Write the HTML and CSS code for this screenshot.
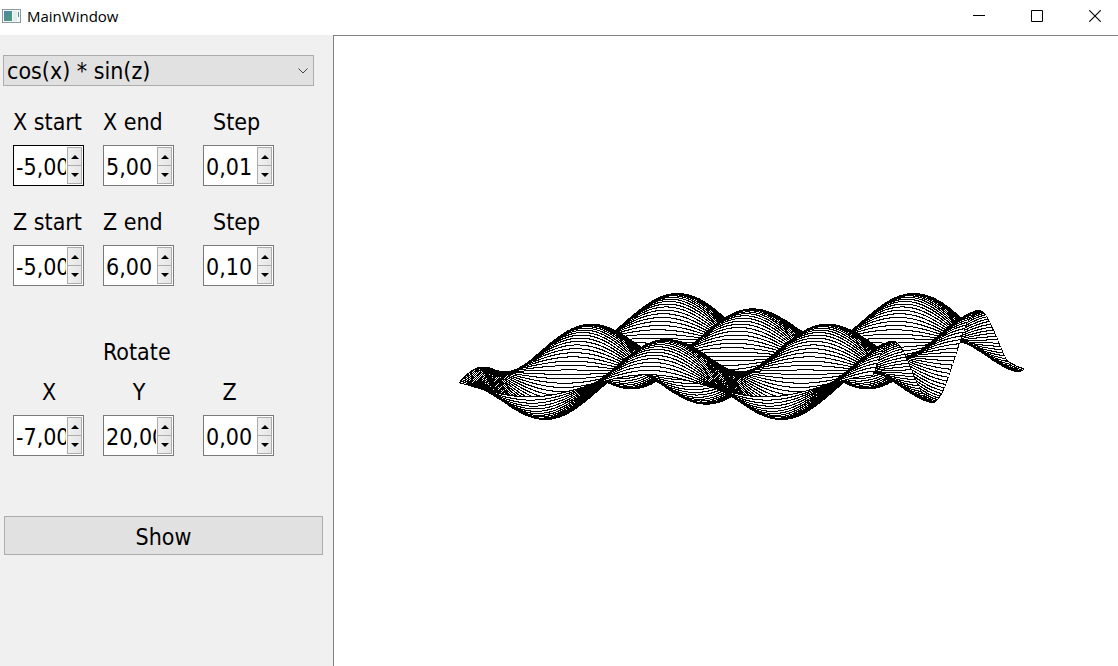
FILE: index.html
```html
<!DOCTYPE html>
<html lang="en">
<head>
<meta charset="utf-8">
<title>MainWindow</title>
<link rel="stylesheet" href="styles.css">
</head>
<body>
<header class="titlebar">
  <svg class="app-icon" width="20" height="16" viewBox="0 0 20 16" aria-hidden="true">
    <defs><linearGradient id="g" x1="0" y1="0" x2="1" y2="1"><stop offset="0" stop-color="#4b86a8"/><stop offset="1" stop-color="#4f9a78"/></linearGradient></defs>
    <rect x="1.5" y="1.5" width="18" height="13" fill="#f4f8f8" stroke="#8c9a9e"/>
    <rect x="3" y="3" width="8" height="10" fill="url(#g)"/>
    <rect x="12" y="3" width="4" height="10" fill="#e2ecec"/>
    <rect x="17" y="4" width="1" height="5" fill="#5d8a96"/>
  </svg>
  <h1 class="title">MainWindow</h1>
  <div class="window-buttons">
    <button class="window-button" aria-label="Minimize"><svg width="12" height="12" viewBox="0 0 12 12"><path d="M0 5.5H12" stroke="#000"/></svg></button>
    <button class="window-button" aria-label="Maximize"><svg width="12" height="12" viewBox="0 0 12 12"><path d="M.5 .5H11.5V11.5H.5Z" fill="none" stroke="#000"/></svg></button>
    <button class="window-button" aria-label="Close"><svg width="12" height="12" viewBox="0 0 12 12"><path d="M.3 .3L11.7 11.7M11.7 .3L.3 11.7" stroke="#000" stroke-width="1.1"/></svg></button>
  </div>
</header>
<main class="content">
  <form class="panel">
    <select class="function-select" aria-label="Function"><option>cos(x) * sin(z)</option></select>
    <div class="fields">
      <label for="xs">X start</label><label for="xe">X end</label><label class="step" for="xd">Step</label>
      <div class="spin focused"><input id="xs" value="-5,00"><div class="arrows"><button type="button" class="arrow up" aria-label="Increase"></button><button type="button" class="arrow down" aria-label="Decrease"></button></div></div>
      <div class="spin"><input id="xe" value="5,00"><div class="arrows"><button type="button" class="arrow up" aria-label="Increase"></button><button type="button" class="arrow down" aria-label="Decrease"></button></div></div>
      <div class="spin"><input id="xd" value="0,01"><div class="arrows"><button type="button" class="arrow up" aria-label="Increase"></button><button type="button" class="arrow down" aria-label="Decrease"></button></div></div>
    </div>
    <div class="fields">
      <label for="zs">Z start</label><label for="ze">Z end</label><label class="step" for="zd">Step</label>
      <div class="spin"><input id="zs" value="-5,00"><div class="arrows"><button type="button" class="arrow up" aria-label="Increase"></button><button type="button" class="arrow down" aria-label="Decrease"></button></div></div>
      <div class="spin"><input id="ze" value="6,00"><div class="arrows"><button type="button" class="arrow up" aria-label="Increase"></button><button type="button" class="arrow down" aria-label="Decrease"></button></div></div>
      <div class="spin"><input id="zd" value="0,10"><div class="arrows"><button type="button" class="arrow up" aria-label="Increase"></button><button type="button" class="arrow down" aria-label="Decrease"></button></div></div>
    </div>
    <div class="fields rotation">
      <h2 class="heading">Rotate</h2>
      <label class="axis" for="rx">X</label><label class="axis" for="ry">Y</label><label class="axis last" for="rz">Z</label>
      <div class="spin"><input id="rx" value="-7,00"><div class="arrows"><button type="button" class="arrow up" aria-label="Increase"></button><button type="button" class="arrow down" aria-label="Decrease"></button></div></div>
      <div class="spin"><input id="ry" value="20,00"><div class="arrows"><button type="button" class="arrow up" aria-label="Increase"></button><button type="button" class="arrow down" aria-label="Decrease"></button></div></div>
      <div class="spin"><input id="rz" value="0,00"><div class="arrows"><button type="button" class="arrow up" aria-label="Increase"></button><button type="button" class="arrow down" aria-label="Decrease"></button></div></div>
    </div>
    <button type="button" class="show">Show</button>
  </form>
  <section class="view"><canvas class="plot" id="plot" role="img" aria-label="Surface plot"></canvas></section>
</main>
<script src="plot.js"></script>
</body>
</html>
```
FILE: styles.css
```css
* { box-sizing: border-box; }
body {
  margin: 0;
  min-height: 100vh;
  display: flex;
  flex-direction: column;
  background: #fff;
  color: #000;
  font: 23px/30px "DejaVu Sans Condensed", "Noto Sans", sans-serif;
}
button, input, select { font: inherit; color: inherit; border-radius: 0; }
h1, h2 { margin: 0; font-weight: normal; }

.titlebar { display: flex; align-items: center; height: 35px; padding: 0 17px 3px 1px; }
.title { margin-left: 6px; font: 15px/20px "Open Sans", sans-serif; }
.window-buttons { display: flex; gap: 46px; margin-left: auto; }
.window-button { display: flex; padding: 0; border: 0; background: none; }

.content { flex: 1; display: flex; }
.panel {
  flex: none;
  width: 333px;
  padding: 20px 10px 0 3px;
  background: #f0f0f0;
}
.function-select {
  display: block;
  width: 311px;
  height: 31px;
  margin-bottom: 21px;
  padding: 0 3px;
  border: 1px solid #adadad;
  appearance: none;
  background: #e1e1e1 url("data:image/svg+xml,%3Csvg xmlns='http://www.w3.org/2000/svg' width='10' height='6'%3E%3Cpath d='M.5 .5L5 5L9.5 .5' fill='none' stroke='%23444'/%3E%3C/svg%3E") no-repeat right 5px center;
}
.fields {
  display: grid;
  grid-template-columns: 90px 100px 71px;
  row-gap: 8px;
  margin-bottom: 21px;
  padding-left: 10px;
}
.fields label { white-space: nowrap; }
.step { padding-left: 10px; }
.rotation { margin: 51px 0 60px; }
.heading { grid-column: 2 / 4; padding-bottom: 2px; font-size: 23px; line-height: 30px; }
.axis { width: 72px; text-align: center; }
.axis.last { width: 53px; }

.spin {
  display: flex;
  width: 71px;
  height: 41px;
  padding: 1px;
  border: 1px solid #7a7a7a;
  background: #fff;
}
.spin.focused { border-color: #000; }
.spin input {
  flex: 1;
  min-width: 0;
  padding: 2px 1px 0 1px;
  border: 0;
  background: none;
  outline: none;
}
.arrows { display: flex; flex-direction: column; width: 15px; border: 1px solid #acacac; }
.arrow {
  flex: 1;
  display: grid;
  place-items: center;
  padding: 0;
  border: 0;
  background: linear-gradient(90deg, #f0f0f0, #e5e5e5);
}
.arrow.down { border-top: 1px solid #acacac; }
.arrow::before { content: ""; border: 4px solid transparent; }
.up::before { border-top: 0; border-bottom-color: #000; }
.down::before { border-bottom: 0; border-top-color: #000; }

.show {
  display: block;
  width: 319px;
  height: 39px;
  margin-left: 1px;
  padding: 2px 0 0;
  border: 1px solid #adadad;
  background: #e1e1e1;
}
.view {
  flex: 1;
  min-width: 0;
  display: flex;
  border: solid #828282;
  border-width: 1px 0 0 1px;
}
.plot { flex: 1; min-width: 0; width: 100%; }
```
FILE: plot.js
```js
// Floating horizon rendering of y = cos(x) * sin(z).
const canvas = document.getElementById("plot");
const w = canvas.width = canvas.clientWidth;
const h = canvas.height = canvas.clientHeight;
const ctx = canvas.getContext("2d");

const SCALE = 40;
const rx = 7 * Math.PI / 180;
const ry = 20 * Math.PI / 180;
const cx = w / 2 + 3;
const cy = h / 2 + 5;

const upper = new Array(w).fill(Infinity);
const lower = new Array(w).fill(-Infinity);

function project(x, z) {
  const y = Math.cos(x) * Math.sin(z);
  const py = y * Math.cos(rx) + z * Math.sin(rx);
  const px = x * Math.cos(ry) + z * Math.sin(ry);
  return [Math.round(cx + px * SCALE), Math.round(cy - py * SCALE)];
}

// Draws the visible part of a curve, then raises and lowers the horizons by it.
function drawCurve(points) {
  const visible = points.filter(([x, y]) =>
    x >= 0 && x < w && (y <= upper[x] || y >= lower[x]));
  for (const [x, y] of visible) {
    ctx.fillRect(x, y, 1, 1);
    upper[x] = Math.min(upper[x], y);
    lower[x] = Math.max(lower[x], y);
  }
}

function edge(x, z) {
  const points = [];
  for (let i = 20; i >= 0; i--) points.push(project(x, z - i / 200));
  drawCurve(points);
}

for (let row = 0; row <= 110; row++) {
  const z = -6 + row / 10;
  const points = [];
  for (let i = 0; i <= 1100; i++) points.push(project(-5 + i / 100, z));
  if (row) edge(-5, z);
  drawCurve(points);
  if (row) edge(6, z);
}
```
